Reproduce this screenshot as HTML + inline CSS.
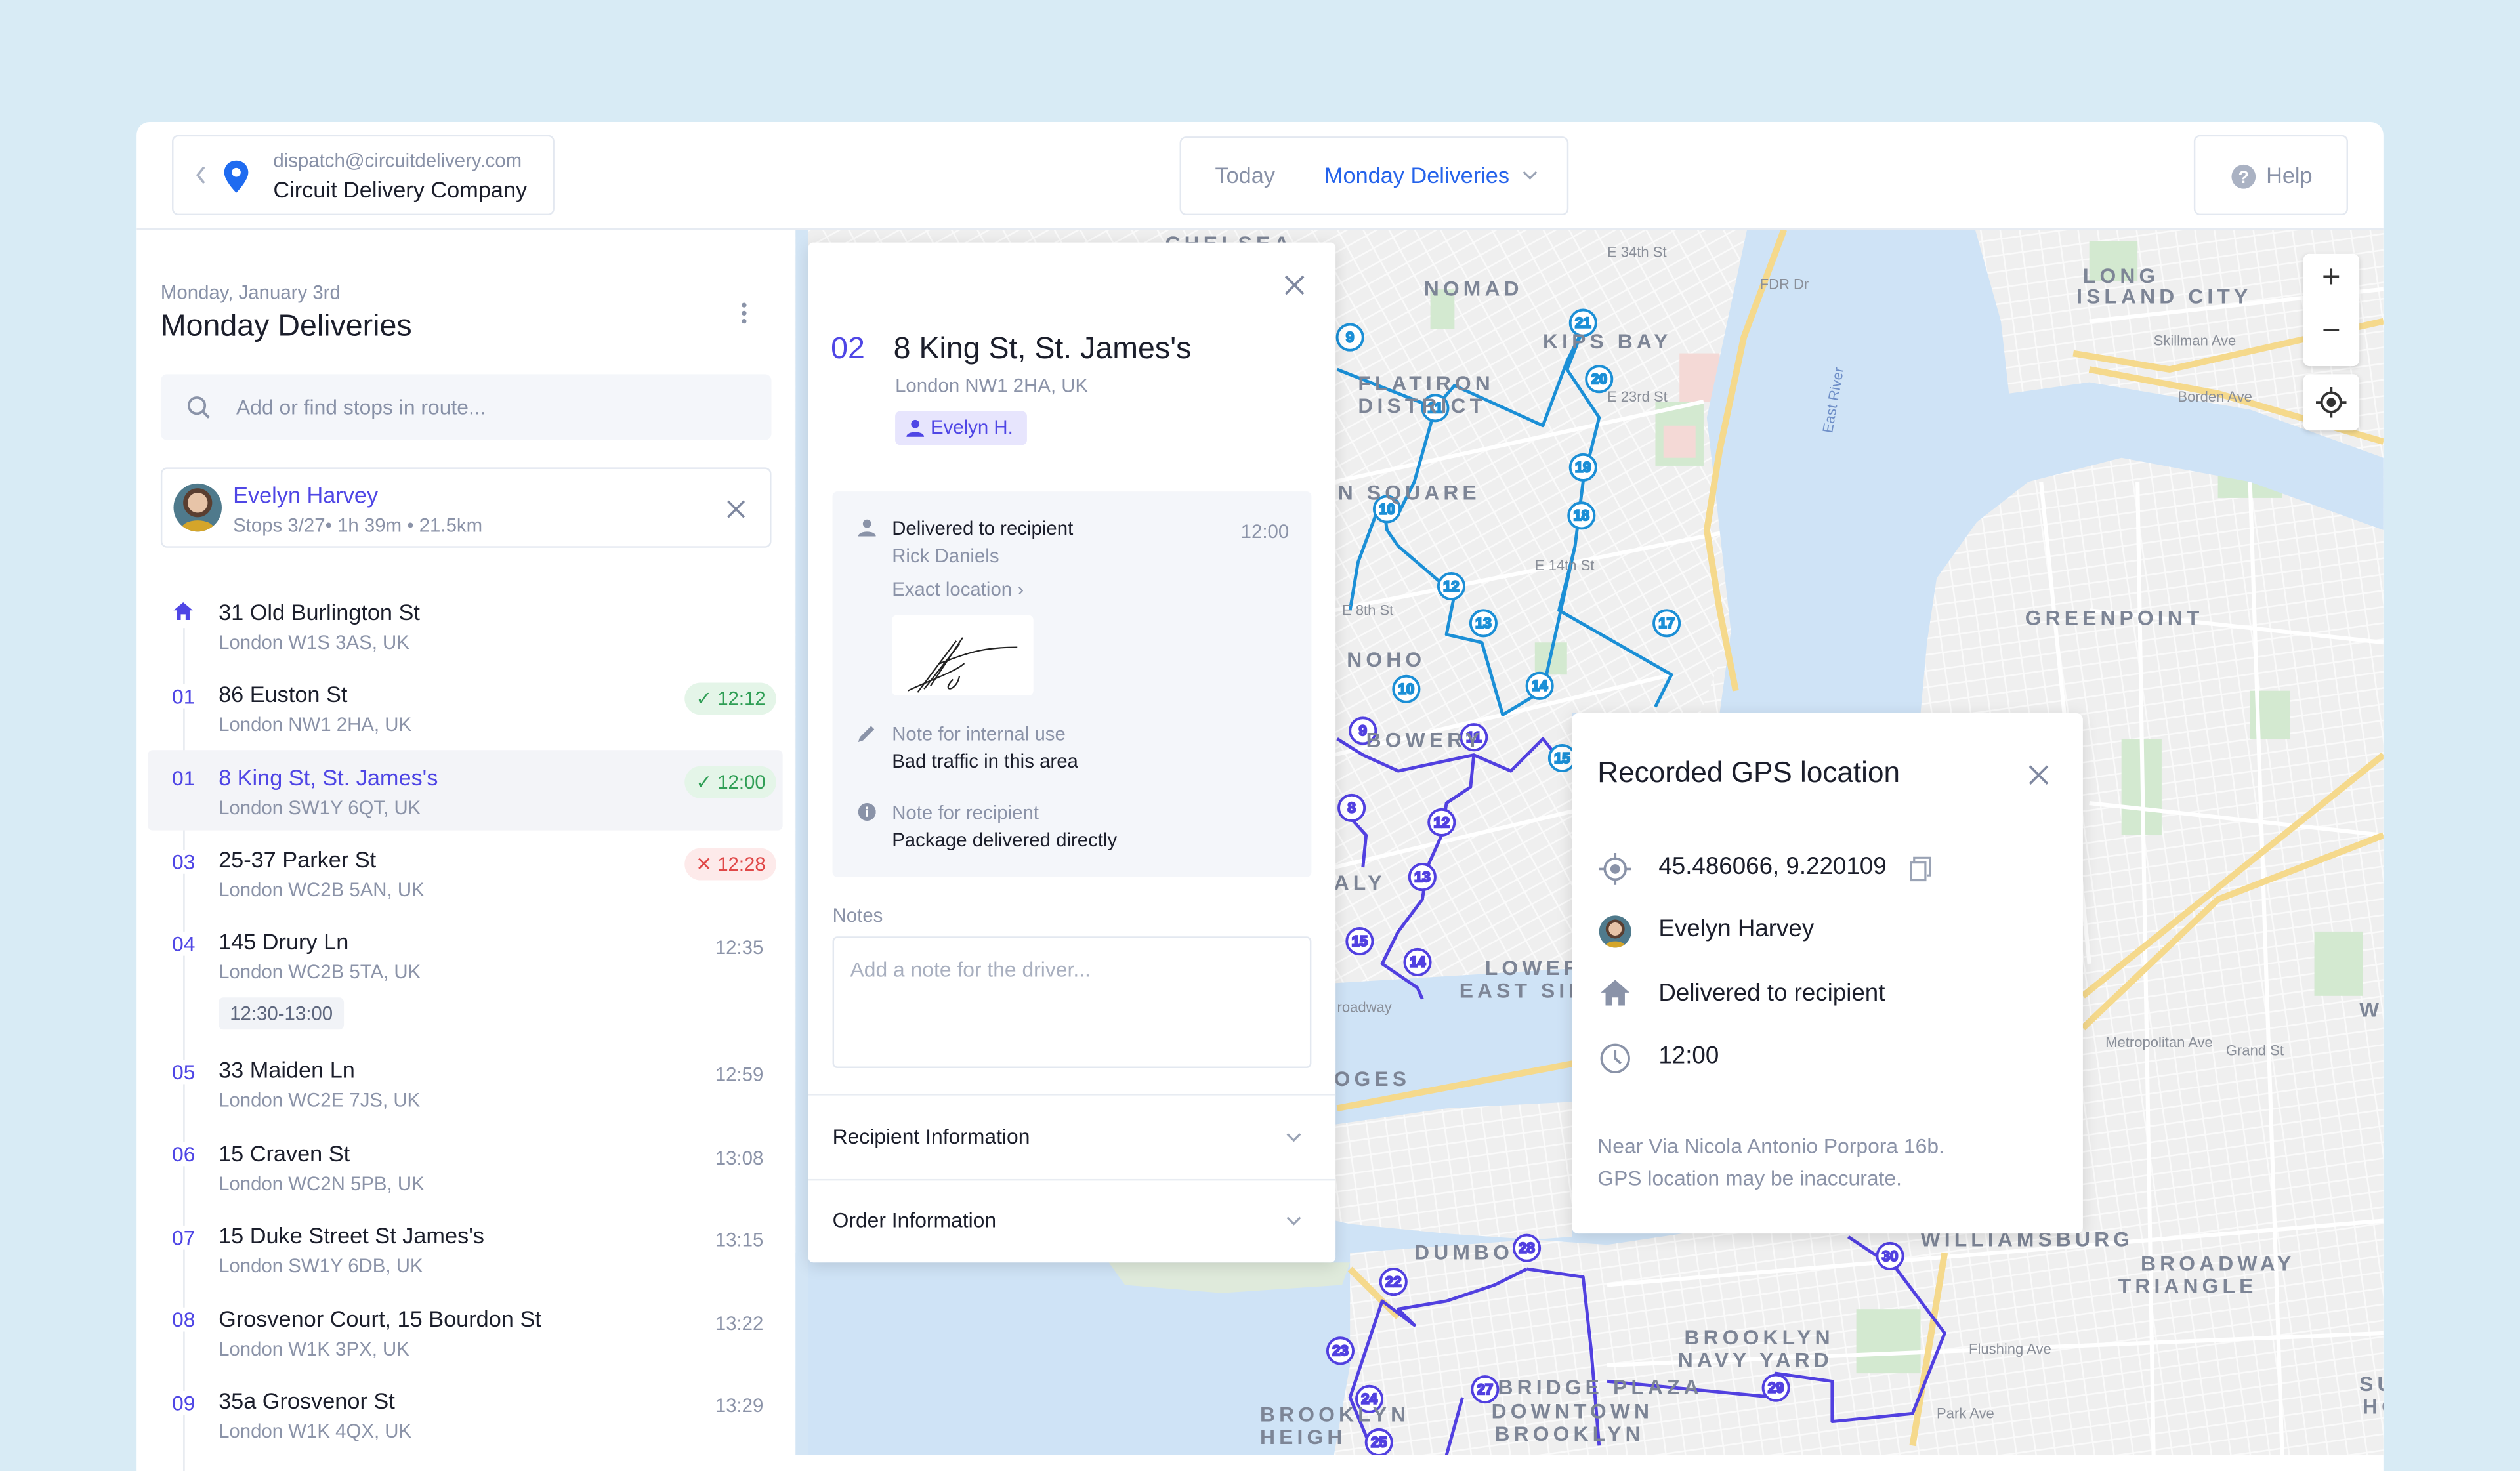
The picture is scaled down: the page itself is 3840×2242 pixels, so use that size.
<!DOCTYPE html>
<html><head><meta charset="utf-8"><style>
*{box-sizing:border-box;margin:0;padding:0}
html,body{width:3840px;height:2218px;overflow:hidden;background:#d8ebf5}
#s{position:absolute;left:0;top:0;width:1568px;height:906px;transform:scale(2.449,2.4481);transform-origin:0 0;font-family:"Liberation Sans",sans-serif;color:#1b1e2b}
.a{position:absolute}
.win{left:85px;top:76px;width:1398px;height:840px;background:#fff;border-radius:8px 8px 0 0;overflow:hidden}
.box{border:1px solid #e3e8f0;border-radius:4px;background:#fff}
.g{color:#8891a7}
.num{color:#4f46e5;font-size:13px}
.ad{font-size:14px;color:#1b1e2b}
.sub{font-size:12px;color:#8b93a8}
.tm{font-size:12px;color:#8b93a8}
.badge{font-size:12px;padding:3px 7px;border-radius:10px}
.lbl{font-family:"Liberation Sans",sans-serif;font-weight:bold;fill:#7d8596;letter-spacing:2.5px;font-size:13px}
.st{font-family:"Liberation Sans",sans-serif;fill:#8a8f99;font-size:9px}
.mk circle{fill:#fff;stroke-width:1.6}
.mk text{font-family:"Liberation Sans",sans-serif;font-size:9px;font-weight:bold;text-anchor:middle}
</style></head><body><div id="s">
<div class="a win">
 <div class="a" style="left:0;top:66px;width:1398px;height:1px;background:#e6ebf2"></div>
 <div class="a box" style="left:22px;top:8px;width:238px;height:50px">
  <svg class="a" style="left:12px;top:17px" width="10" height="14" viewBox="0 0 10 14"><path d="M7 2 L3 7 L7 12" fill="none" stroke="#aab2c3" stroke-width="1.5"/></svg>
  <svg class="a" style="left:30px;top:14px" width="18" height="22" viewBox="0 0 18 22"><path d="M9 1C4.6 1 1.5 4.3 1.5 8.4 1.5 13.5 9 21 9 21S16.5 13.5 16.5 8.4C16.5 4.3 13.4 1 9 1z" fill="#1f6bf0"/><circle cx="9" cy="8.3" r="2.8" fill="#fff"/></svg>
  <div class="a g" style="left:62px;top:8px;font-size:12px">dispatch@circuitdelivery.com</div>
  <div class="a" style="left:62px;top:25px;font-size:14px">Circuit Delivery Company</div>
 </div>
 <div class="a box" style="left:649px;top:9px;width:242px;height:49px">
  <div class="a g" style="left:21px;top:15px;font-size:14px">Today</div>
  <div class="a" style="left:89px;top:15px;font-size:14px;color:#2563eb">Monday Deliveries</div>
  <svg class="a" style="left:212px;top:19px" width="10" height="8"><path d="M1 2 L5 6 L9 2" fill="none" stroke="#9aa3b5" stroke-width="1.3"/></svg>
 </div>
 <div class="a box" style="left:1280px;top:8px;width:96px;height:50px">
  <svg class="a" style="left:22px;top:17px" width="16" height="16"><circle cx="8" cy="8" r="7.5" fill="#aab2c3"/><text x="8" y="12" font-size="11" font-weight="bold" fill="#fff" text-anchor="middle" font-family="Liberation Sans">?</text></svg>
  <div class="a g" style="left:44px;top:16px;font-size:14px">Help</div>
 </div>
 <div class="a g" style="left:15px;top:99px;font-size:12px">Monday, January 3rd</div>
 <div class="a" style="left:15px;top:117px;font-size:19px">Monday Deliveries</div>
 <svg class="a" style="left:376px;top:112px" width="4" height="16"><circle cx="2" cy="2" r="1.5" fill="#8a93a8"/><circle cx="2" cy="7" r="1.5" fill="#8a93a8"/><circle cx="2" cy="12" r="1.5" fill="#8a93a8"/></svg>
 <div class="a" style="left:15px;top:157px;width:380px;height:41px;background:#f4f6fa;border-radius:4px">
  <svg class="a" style="left:16px;top:13px" width="16" height="16"><circle cx="6.5" cy="6.5" r="5" fill="none" stroke="#8a93a8" stroke-width="1.5"/><path d="M10 10 L14 14" stroke="#8a93a8" stroke-width="1.6"/></svg>
  <div class="a g" style="left:47px;top:13px;font-size:13px">Add or find stops in route...</div>
 </div>
 <div class="a box" style="left:15px;top:215px;width:380px;height:50px">
  <div class="a" style="left:7px;top:9px;width:30px;height:30px;border-radius:50%;background:radial-gradient(circle at 50% 40%,#e7c4a8 0 26%,#5a3e30 27% 38%,#4f7a8c 39%);overflow:hidden"><div style="position:absolute;left:5px;top:23px;width:20px;height:10px;background:#d4a52a;border-radius:50% 50% 0 0"></div></div>
  <div class="a" style="left:44px;top:8px;font-size:14px;color:#4f46e5">Evelyn Harvey</div>
  <div class="a sub" style="left:44px;top:28px">Stops 3/27• 1h 39m • 21.5km</div>
  <svg class="a" style="left:351px;top:19px" width="12" height="12"><path d="M1 1L11 11M11 1L1 11" stroke="#7f88a0" stroke-width="1.4"/></svg>
 </div>
 <div class="a" style="left:29px;top:315px;width:1px;height:530px;background:#e3e7ee"></div>
 <div class="a" style="left:7px;top:391px;width:395px;height:50px;background:#f3f4f8;border-radius:3px"></div>
 <svg class="a" style="left:23px;top:299px;background:#fff" width="12" height="11"><path d="M6 0L12 5H10V11H7.5V7.5H4.5V11H2V5H0Z" fill="#4f46e5"/></svg>
 <div class="a ad" style="left:51px;top:297px">31 Old Burlington St</div><div class="a sub" style="left:51px;top:317px">London W1S 3AS, UK</div>
 <div class="a num" style="left:22px;top:350px;background:#fff">01</div><div class="a ad" style="left:51px;top:348px">86 Euston St</div><div class="a sub" style="left:51px;top:368px">London NW1 2HA, UK</div>
 <div class="a badge" style="left:341px;top:349px;background:#e4f5e8;color:#2f9e55">✓ 12:12</div>
 <div class="a num" style="left:22px;top:401px;background:#f3f4f8">01</div><div class="a ad" style="left:51px;top:400px;color:#4f46e5">8 King St, St. James's</div><div class="a sub" style="left:51px;top:420px">London SW1Y 6QT, UK</div>
 <div class="a badge" style="left:341px;top:401px;background:#e4f5e8;color:#2f9e55">✓ 12:00</div>
 <div class="a num" style="left:22px;top:453px;background:#fff">03</div><div class="a ad" style="left:51px;top:451px">25-37 Parker St</div><div class="a sub" style="left:51px;top:471px">London WC2B 5AN, UK</div>
 <div class="a badge" style="left:341px;top:452px;background:#fdeaea;color:#e04848">✕ 12:28</div>
 <div class="a num" style="left:22px;top:504px;background:#fff">04</div><div class="a ad" style="left:51px;top:502px">145 Drury Ln</div><div class="a sub" style="left:51px;top:522px">London WC2B 5TA, UK</div><div class="a tm" style="left:360px;top:507px">12:35</div>
 <div class="a" style="left:51px;top:545px;background:#f1f3f7;border-radius:3px;padding:3px 7px;font-size:12px;color:#5d667d">12:30-13:00</div>
 <div class="a num" style="left:22px;top:584px;background:#fff">05</div><div class="a ad" style="left:51px;top:582px">33 Maiden Ln</div><div class="a sub" style="left:51px;top:602px">London WC2E 7JS, UK</div><div class="a tm" style="left:360px;top:586px">12:59</div>
 <div class="a num" style="left:22px;top:635px;background:#fff">06</div><div class="a ad" style="left:51px;top:634px">15 Craven St</div><div class="a sub" style="left:51px;top:654px">London WC2N 5PB, UK</div><div class="a tm" style="left:360px;top:638px">13:08</div>
 <div class="a num" style="left:22px;top:687px;background:#fff">07</div><div class="a ad" style="left:51px;top:685px">15 Duke Street St James's</div><div class="a sub" style="left:51px;top:705px">London SW1Y 6DB, UK</div><div class="a tm" style="left:360px;top:689px">13:15</div>
 <div class="a num" style="left:22px;top:738px;background:#fff">08</div><div class="a ad" style="left:51px;top:737px">Grosvenor Court, 15 Bourdon St</div><div class="a sub" style="left:51px;top:757px">London W1K 3PX, UK</div><div class="a tm" style="left:360px;top:741px">13:22</div>
 <div class="a num" style="left:22px;top:790px;background:#fff">09</div><div class="a ad" style="left:51px;top:788px">35a Grosvenor St</div><div class="a sub" style="left:51px;top:808px">London W1K 4QX, UK</div><div class="a tm" style="left:360px;top:792px">13:29</div>
</div>

<svg class="a" style="left:495px;top:143px" width="988" height="763" viewBox="495 143 988 763">
 <defs>
  <pattern id="mg" width="14" height="9" patternUnits="userSpaceOnUse" patternTransform="rotate(-29)"><rect width="14" height="9" fill="#efefef"/><path d="M0 0.5H14M0.5 0V9" stroke="#fafafa" stroke-width="1"/></pattern>
  <pattern id="bg" width="12" height="10" patternUnits="userSpaceOnUse" patternTransform="rotate(-8)"><rect width="12" height="10" fill="#efefef"/><path d="M0 0.5H12M0.5 0V10" stroke="#fafafa" stroke-width="1"/></pattern>
 </defs>
 <rect x="495" y="143" width="988" height="763" fill="url(#bg)"/>
 <path d="M495 143 L1087 143 L1062 260 L1077 393 L1000 600 L831 640 L495 700Z" fill="url(#mg)"/>
 <g fill="#d3e9d0">
  <rect x="1030" y="250" width="30" height="40"/><rect x="1380" y="280" width="40" height="30"/><rect x="1320" y="460" width="25" height="60"/><rect x="1155" y="815" width="40" height="40"/><rect x="1440" y="580" width="30" height="40"/><rect x="1300" y="150" width="30" height="25"/><rect x="890" y="180" width="15" height="25"/><rect x="955" y="400" width="20" height="20"/><rect x="1400" y="430" width="25" height="30"/>
 </g>
 <g fill="#f4d9d6"><rect x="1045" y="220" width="25" height="30"/><rect x="1035" y="265" width="20" height="20"/></g>
 <g stroke="#fff" stroke-width="2.5" fill="none">
  <path d="M830 300 L1060 250 M830 380 L1080 330 M830 470 L1040 420 M830 540 L1000 500 M1300 200 L1483 180 M1300 380 L1483 400 M1300 500 L1483 520 M1330 300 L1340 906 M1400 300 L1420 906 M1000 800 L1483 760 M1000 850 L1483 830 M1270 300 L1300 600"/>
 </g>
 <path d="M1087 143 L1229 143 L1245 200 L1250 245 L1300 238 L1400 255 L1483 285 L1483 330 L1400 300 L1320 285 L1262 300 L1230 325 L1205 360 L1199 400 L1195 444 L1180 560 L1080 600 L978 603 L831 612 L831 700 L900 690 L978 686 L1000 700 L1060 740 L1100 760 L1000 775 L900 768 L840 762 L831 760 L831 780 L495 780 L495 906 L830 906 L840 850 L840 780 L978 770 L978 444 L1070 444 L1077 393 L1070 330 L1062 260 Z" fill="#cfe3f6"/>
 <rect x="495" y="143" width="8" height="763" fill="#d3e5f5"/>
 <path d="M690 786 L840 786 L835 800 L760 805 L700 800Z" fill="#dfeadb"/>
 <g stroke="#f5d98c" stroke-width="4" fill="none">
  <path d="M1110 143 L1085 210 L1070 280 L1062 330 L1070 380 L1080 430"/><path d="M1290 220 L1350 230 L1483 200"/><path d="M1300 230 L1380 245 L1483 275"/><path d="M1296 620 L1483 470"/><path d="M832 690 L990 660"/><path d="M1296 640 L1380 560 L1483 520"/><path d="M840 790 L870 820 M1190 900 L1210 780"/>
 </g>
 <g fill="none" stroke-width="2" stroke-linejoin="round">
  <path stroke="#1b8fd6" d="M832 230 L893 254 L905 240 L960 265 L975 225 L985 205 M985 205 L975 230 L995 260 L985 300 L980 340 L970 380 L1040 420 L1030 440 M980 340 L960 430 L935 445 L922 400 L900 395 L905 370 L870 340 L863 330 L860 310 L845 350 L840 380 M893 254 L880 300 L870 320"/>
  <path stroke="#5140e0" d="M832 460 L848 470 L870 480 L917 470 L915 490 L900 500 L897 520 L888 540 L885 560 L870 580 L860 600 L882 615 L885 622 M917 470 L940 480 L960 460 L972 475 M841 510 L850 520 L848 540 M950 790 L930 800 L900 810 L870 815 L880 825 L860 810 L850 840 L840 870 L855 906 M950 790 L985 795 L990 840 L995 900 M1105 870 L1105 855 L1140 860 L1140 885 L1190 880 L1210 830 L1180 790 L1150 770 M910 870 L900 906 M1105 870 L1000 860"/>
 </g>
 <g class="mk">
  <g stroke="#1b8fd6" fill="#1b8fd6"><circle cx="840" cy="210" r="8"/><text x="840" y="213">9</text><circle cx="985" cy="201" r="8"/><text x="985" y="204">21</text><circle cx="995" cy="236" r="8"/><text x="995" y="239">20</text><circle cx="893" cy="254" r="8"/><text x="893" y="257">11</text><circle cx="985" cy="291" r="8"/><text x="985" y="294">19</text><circle cx="984" cy="321" r="8"/><text x="984" y="324">18</text><circle cx="863" cy="317" r="8"/><text x="863" y="320">10</text><circle cx="903" cy="365" r="8"/><text x="903" y="368">12</text><circle cx="923" cy="388" r="8"/><text x="923" y="391">13</text><circle cx="1037" cy="388" r="8"/><text x="1037" y="391">17</text><circle cx="875" cy="429" r="8"/><text x="875" y="432">10</text><circle cx="958" cy="427" r="8"/><text x="958" y="430">14</text><circle cx="972" cy="472" r="8"/><text x="972" y="475">15</text></g>
  <g stroke="#5140e0" fill="#5140e0"><circle cx="848" cy="455" r="8"/><text x="848" y="458">9</text><circle cx="917" cy="459" r="8"/><text x="917" y="462">11</text><circle cx="841" cy="503" r="8"/><text x="841" y="506">8</text><circle cx="897" cy="512" r="8"/><text x="897" y="515">12</text><circle cx="885" cy="546" r="8"/><text x="885" y="549">13</text><circle cx="846" cy="586" r="8"/><text x="846" y="589">15</text><circle cx="882" cy="599" r="8"/><text x="882" y="602">14</text><circle cx="950" cy="777" r="8"/><text x="950" y="780">28</text><circle cx="867" cy="798" r="8"/><text x="867" y="801">22</text><circle cx="1176" cy="782" r="8"/><text x="1176" y="785">30</text><circle cx="834" cy="841" r="8"/><text x="834" y="844">23</text><circle cx="924" cy="865" r="8"/><text x="924" y="868">27</text><circle cx="1105" cy="864" r="8"/><text x="1105" y="867">29</text><circle cx="852" cy="871" r="8"/><text x="852" y="874">24</text><circle cx="858" cy="898" r="8"/><text x="858" y="901">25</text></g>
 </g>
 <g class="lbl">
  <text x="725" y="156">CHELSEA</text><text x="886" y="184">NOMAD</text><text x="960" y="217">KIPS BAY</text><text x="845" y="243">FLATIRON</text><text x="845" y="257">DISTRICT</text><text x="790" y="311">UNION SQUARE</text><text x="1296" y="176">LONG</text><text x="1292" y="189">ISLAND CITY</text><text x="1260" y="389">GREENPOINT</text><text x="838" y="415">NOHO</text><text x="850" y="465">BOWERY</text><text x="830" y="554">ALY</text><text x="924" y="607">LOWER</text><text x="908" y="621">EAST SIDE</text><text x="830" y="676">OGES</text><text x="880" y="784">DUMBO</text><text x="1048" y="837">BROOKLYN</text><text x="1044" y="851">NAVY YARD</text><text x="1195" y="776">WILLIAMSBURG</text><text x="1332" y="791">BROADWAY</text><text x="1318" y="805">TRIANGLE</text><text x="932" y="868">BRIDGE PLAZA</text><text x="928" y="883">DOWNTOWN</text><text x="930" y="897">BROOKLYN</text><text x="1468" y="866">SUMNER</text><text x="1470" y="880">HOUSES</text><text x="784" y="885">BROOKLYN</text><text x="784" y="899">HEIGH</text><text x="1468" y="633">W</text>
 </g>
 <g class="st"><text x="1140" y="270" transform="rotate(-80 1140 270)" fill="#6f8fc8">East River</text><text x="1340" y="215">Skillman Ave</text><text x="1355" y="250">Borden Ave</text><text x="1310" y="652">Metropolitan Ave</text><text x="1385" y="657">Grand St</text><text x="1225" y="843">Flushing Ave</text><text x="1205" y="883">Park Ave</text><text x="1000" y="250">E 23rd St</text><text x="955" y="355">E 14th St</text><text x="835" y="383">E 8th St</text><text x="832" y="630">roadway</text><text x="1000" y="160">E 34th St</text><text x="1095" y="180">FDR Dr</text></g>
</svg>

<div class="a" style="left:1433px;top:158px;width:35px;height:70px;background:#fff;border-radius:4px;box-shadow:0 1px 3px rgba(0,0,0,.15)">
 <div class="a" style="left:0;top:4px;width:35px;text-align:center;font-size:20px;color:#333">+</div>
 <div class="a" style="left:0;top:37px;width:35px;text-align:center;font-size:20px;color:#333">−</div>
</div>
<div class="a" style="left:1433px;top:233px;width:35px;height:35px;background:#fff;border-radius:4px;box-shadow:0 1px 3px rgba(0,0,0,.15)">
 <svg class="a" style="left:8px;top:8px" width="19" height="19"><circle cx="9.5" cy="9.5" r="6" fill="none" stroke="#333" stroke-width="1.6"/><circle cx="9.5" cy="9.5" r="2.8" fill="#333"/><path d="M9.5 0V3.5M9.5 15.5V19M0 9.5H3.5M15.5 9.5H19" stroke="#333" stroke-width="1.6"/></svg>
</div>

<div class="a" style="left:503px;top:151px;width:328px;height:635px;background:#fff;border-radius:3px;box-shadow:0 2px 10px rgba(0,0,0,.12)">
 <svg class="a" style="left:296px;top:20px" width="13" height="13"><path d="M1 1L12 12M12 1L1 12" stroke="#7f88a0" stroke-width="1.5"/></svg>
 <div class="a" style="left:14px;top:56px;font-size:19px;color:#4f46e5">02</div>
 <div class="a" style="left:53px;top:56px;font-size:19px">8 King St, St. James's</div>
 <div class="a sub" style="left:54px;top:82px">London NW1 2HA, UK</div>
 <div class="a" style="left:54px;top:105px;width:82px;height:21px;background:#e7e5fd;border-radius:3px;color:#4f46e5;font-size:12px;padding:3px 0 0 22px">Evelyn H.</div>
 <svg class="a" style="left:61px;top:110px" width="11" height="11"><circle cx="5.5" cy="3" r="2.6" fill="#4f46e5"/><path d="M0 11C0 7 11 7 11 11Z" fill="#4f46e5"/></svg>
 <div class="a" style="left:15px;top:155px;width:298px;height:240px;background:#f4f6fa;border-radius:3px">
  <svg class="a" style="left:16px;top:17px" width="11" height="11"><circle cx="5.5" cy="3" r="2.6" fill="#8a93a8"/><path d="M0 11C0 7 11 7 11 11Z" fill="#8a93a8"/></svg>
  <div class="a" style="left:37px;top:16px;font-size:12px">Delivered to recipient</div>
  <div class="a tm" style="left:254px;top:18px">12:00</div>
  <div class="a sub" style="left:37px;top:33px">Rick Daniels</div>
  <div class="a sub" style="left:37px;top:54px">Exact location ›</div>
  <div class="a" style="left:37px;top:77px;width:88px;height:50px;background:#fff;border-radius:3px">
   <svg width="88" height="50"><path d="M10 47 C20 42 40 35 45 30 M16 48 L40 16 M20 46 L42 18 M24 44 L44 14 M30 30 C50 22 60 20 78 20 M38 40 C30 48 40 48 42 38" fill="none" stroke="#222" stroke-width=".9"/></svg>
  </div>
  <svg class="a" style="left:16px;top:145px" width="11" height="11"><path d="M0 11L1 8L8 1L10 3L3 10Z" fill="#8a93a8"/></svg>
  <div class="a sub" style="left:37px;top:144px">Note for internal use</div>
  <div class="a" style="left:37px;top:161px;font-size:12px">Bad traffic in this area</div>
  <svg class="a" style="left:16px;top:194px" width="11" height="11"><circle cx="5.5" cy="5.5" r="5.5" fill="#8a93a8"/><rect x="4.8" y="4.5" width="1.4" height="4" fill="#fff"/><circle cx="5.5" cy="3" r=".8" fill="#fff"/></svg>
  <div class="a sub" style="left:37px;top:193px">Note for recipient</div>
  <div class="a" style="left:37px;top:210px;font-size:12px">Package delivered directly</div>
 </div>
 <div class="a sub" style="left:15px;top:412px">Notes</div>
 <div class="a" style="left:15px;top:432px;width:298px;height:82px;border:1px solid #e3e8f0;border-radius:3px"><div class="a" style="left:10px;top:12px;font-size:13px;color:#a8afbf">Add a note for the driver...</div></div>
 <div class="a" style="left:0;top:530px;width:328px;height:1px;background:#e8ecf2"></div>
 <div class="a" style="left:15px;top:549px;font-size:13px">Recipient Information</div>
 <svg class="a" style="left:297px;top:554px" width="10" height="7"><path d="M1 1L5 5L9 1" fill="none" stroke="#9aa3b5" stroke-width="1.3"/></svg>
 <div class="a" style="left:0;top:583px;width:328px;height:1px;background:#e8ecf2"></div>
 <div class="a" style="left:15px;top:601px;font-size:13px">Order Information</div>
 <svg class="a" style="left:297px;top:606px" width="10" height="7"><path d="M1 1L5 5L9 1" fill="none" stroke="#9aa3b5" stroke-width="1.3"/></svg>
</div>

<div class="a" style="left:978px;top:444px;width:318px;height:324px;background:#fff;border-radius:4px;box-shadow:0 2px 10px rgba(0,0,0,.12)">
 <div class="a" style="left:16px;top:27px;font-size:18px">Recorded GPS location</div>
 <svg class="a" style="left:284px;top:32px" width="13" height="13"><path d="M1 1L12 12M12 1L1 12" stroke="#7f88a0" stroke-width="1.5"/></svg>
 <svg class="a" style="left:17px;top:87px" width="20" height="20"><circle cx="10" cy="10" r="6.5" fill="none" stroke="#8a93a8" stroke-width="1.5"/><circle cx="10" cy="10" r="3" fill="#8a93a8"/><path d="M10 0V3M10 17V20M0 10H3M17 10H20" stroke="#8a93a8" stroke-width="1.5"/></svg>
 <div class="a" style="left:54px;top:87px;font-size:15px">45.486066, 9.220109</div>
 <svg class="a" style="left:210px;top:89px" width="14" height="16"><path d="M3 3V1H13V12H11" fill="none" stroke="#9aa3b5" stroke-width="1.3"/><rect x="1" y="4" width="9" height="11" fill="none" stroke="#9aa3b5" stroke-width="1.3"/></svg>
 <div class="a" style="left:17px;top:126px;width:20px;height:20px;border-radius:50%;background:radial-gradient(circle at 50% 42%,#e7c4a8 0 26%,#5a3e30 27% 38%,#4f7a8c 39%);overflow:hidden"><div style="position:absolute;left:4px;top:16px;width:12px;height:6px;background:#d4a52a;border-radius:50% 50% 0 0"></div></div>
 <div class="a" style="left:54px;top:126px;font-size:15px">Evelyn Harvey</div>
 <svg class="a" style="left:18px;top:166px" width="18" height="16"><path d="M9 0L18 8H15V16H11V11H7V16H3V8H0Z" fill="#8a93a8"/></svg>
 <div class="a" style="left:54px;top:166px;font-size:15px">Delivered to recipient</div>
 <svg class="a" style="left:17px;top:205px" width="20" height="20"><circle cx="10" cy="10" r="8.5" fill="none" stroke="#8a93a8" stroke-width="1.5"/><path d="M10 5V10L13.5 13" fill="none" stroke="#8a93a8" stroke-width="1.5"/></svg>
 <div class="a" style="left:54px;top:205px;font-size:15px">12:00</div>
 <div class="a" style="left:16px;top:260px;font-size:13px;color:#8b93a8;line-height:20px">Near Via Nicola Antonio Porpora 16b.<br>GPS location may be inaccurate.</div>
</div>
</div></body></html>
